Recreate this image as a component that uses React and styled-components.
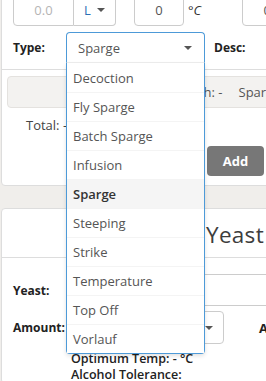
import React from 'react';
import styled, { createGlobalStyle } from 'styled-components';

const GlobalStyle = createGlobalStyle`
    html, body {
        margin: 0;
        padding: 0;
        background: #f0eeeb;
        overflow: hidden;
        font-family: "Open Sans", "Liberation Sans", sans-serif;
        font-size: 13px;
        color: #555;
    }
`;

const Page = styled.div`
    width: 266px;
    height: 381px;
    overflow: hidden;
`;

const Card = styled.div`
    position: relative;
    width: 420px;
    margin-left: 1px;
    margin-top: ${p => p.$top || 0}px;
    padding: ${p => p.$pad || '0'};
    background: #fff;
    border: 1px solid #ddd;
    border-radius: 4px;
    box-sizing: border-box;
`;

const Row = styled.div`
    display: flex;
    align-items: center;
    height: ${p => p.$h || 32}px;
    margin-top: ${p => p.$mt || 0}px;
    padding-left: 11px;
`;

const Label = styled.div`
    width: ${p => p.$w || 53}px;
    margin-left: ${p => p.$ml || 0}px;
    flex-shrink: 0;
    font-size: 12px;
    font-weight: 700;
    color: #222;
`;

const Group = styled.div`
    display: flex;
    height: 32px;
`;

const Input = styled.div`
    box-sizing: border-box;
    width: ${p => p.$w}px;
    height: ${p => p.$h || 32}px;
    margin-left: ${p => p.$ml || 0}px;
    padding-right: ${p => (p.$end ? 10 : 0)}px;
    border: 1px solid #ccc;
    border-radius: ${p => p.$radius || '4px'};
    display: flex;
    align-items: center;
    justify-content: ${p => (p.$end ? 'flex-end' : 'center')};
    color: ${p => (p.$placeholder ? '#b5b5b5' : '#555')};
    background: #fff;
    flex-shrink: 0;
`;

const UnitSelect = styled(Input)`
    border-left: none;
    color: #2a6fb5;
    gap: 6px;
`;

const Caret = styled.span`
    width: 0;
    height: 0;
    border-left: 4px solid transparent;
    border-right: 4px solid transparent;
    border-top: 4px solid #555;
`;

const Unit = styled.span`
    margin-left: 4px;
    color: #333;
`;

const SelectWrap = styled.div`
    position: relative;
    width: 139px;
    height: 31px;
    flex-shrink: 0;
`;

const SelectBox = styled.div`
    box-sizing: border-box;
    height: 31px;
    padding: 0 12px 0 11px;
    display: flex;
    align-items: center;
    justify-content: space-between;
    border: 1px solid #4d9ad8;
    border-bottom-color: #eee;
    border-radius: 4px 4px 0 0;
    color: #555;
    font-size: 13px;
    background: #fff;
`;

const Menu = styled.ul`
    position: absolute;
    top: 31px;
    left: 0;
    right: 0;
    z-index: 10;
    margin: 0;
    padding: 0;
    list-style: none;
    background: #fff;
    border: 1px solid #4d9ad8;
    border-top: none;
    border-radius: 0 0 4px 4px;
    box-shadow: 0 2px 4px rgba(0, 0, 0, 0.12);
`;

const Item = styled.li`
    height: 29px;
    box-sizing: border-box;
    padding-left: 6px;
    display: flex;
    align-items: center;
    font-size: 13px;
    color: ${p => (p.$active ? '#333' : '#555')};
    font-weight: ${p => (p.$active ? 600 : 400)};
    background: ${p => (p.$active ? '#f5f5f5' : '#fff')};
    border-top: 1px solid #f4f4f4;
    &:first-child {
        border-top: none;
    }
`;

const Divider = styled.div`
    height: 1px;
    background: #ddd;
    margin-top: ${p => p.$mt || 0}px;
`;

const Well = styled.div`
    box-sizing: border-box;
    height: 32px;
    margin: 6px 0 0 5px;
    padding-left: 101px;
    display: flex;
    align-items: center;
    background: #f3f2f0;
    border: 1px solid #e4e2df;
    border-radius: 4px;
    color: #555;
    white-space: nowrap;
`;

const WellItem = styled.span`
    margin-left: ${p => p.$ml || 0}px;
`;

const Total = styled.div`
    margin: 8px 0 0 24px;
    line-height: 18px;
    color: #444;
`;

const ButtonRow = styled.div`
    display: flex;
    padding-left: 205px;
    margin-top: 12px;
`;

const AddButton = styled.button`
    width: 57px;
    height: 30px;
    border: none;
    border-radius: 4px;
    background: #777;
    color: #fff;
    font-family: inherit;
    font-size: 13px;
    font-weight: 700;
`;

const Heading = styled.h2`
    margin: 0;
    padding: 11px 0 7px 204px;
    font-size: 22.5px;
    line-height: 30px;
    font-weight: 400;
    letter-spacing: 0.3px;
    color: #3d3d3d;
    border-bottom: 1px solid #ddd;
`;

const SideLabel = styled.div`
    margin-left: ${p => p.$ml}px;
    font-weight: ${p => (p.$bold ? 700 : 400)};
    white-space: nowrap;
    color: #222;
`;

const Info = styled.div`
    padding-left: 69px;
    margin-top: ${p => p.$mt || 0}px;
    height: 16px;
    line-height: 16px;
    color: #222;
    font-size: 12.5px;
    font-weight: 600;
    display: flex;
    align-items: center;
    white-space: nowrap;
`;

const types = ['Decoction', 'Fly Sparge', 'Batch Sparge', 'Infusion', 'Sparge', 'Steeping', 'Strike', 'Temperature', 'Top Off', 'Vorlauf'];

export default function App() {
    return (
        <Page>
            <GlobalStyle />
            <Card $top={-20} $pad="13px 0 9px 0">
                <Row>
                    <Group>
                        <Input $w={61} $placeholder $radius="4px 0 0 4px">0.0</Input>
                        <UnitSelect $w={42} $radius="0 4px 4px 0">L <Caret /></UnitSelect>
                    </Group>
                    <Input $w={50} $ml={18}>0</Input>
                    <Unit>°<i>C</i></Unit>
                    <Input $w={50} $ml={41}>0</Input>
                </Row>
                <Row $h={31} $mt={6}>
                    <Label>Type:</Label>
                    <SelectWrap>
                        <SelectBox>Sparge <Caret /></SelectBox>
                        <Menu>
                            {types.map(t => (
                                <Item key={t} $active={t === 'Sparge'}>{t}</Item>
                            ))}
                        </Menu>
                    </SelectWrap>
                    <Label $ml={9}>Desc:</Label>
                </Row>
                <Divider $mt={6} />
                <Well>
                    <WellItem>Vol: -</WellItem>
                    <WellItem $ml={31}>Length: -</WellItem>
                    <WellItem $ml={16}>Sparge</WellItem>
                </Well>
                <Total>Total: -</Total>
                <ButtonRow>
                    <AddButton>Add</AddButton>
                </ButtonRow>
            </Card>
            <Card $top={22}>
                <Heading>Yeast</Heading>
                <Row $mt={16}>
                    <Label>Yeast:</Label>
                    <Input $w={300} />
                </Row>
                <Row $h={33} $mt={5}>
                    <Label>Amount:</Label>
                    <Input $w={158} $h={33} $end><Caret /></Input>
                    <SideLabel $ml={35} $bold>Attenuation:</SideLabel>
                </Row>
                <Info $mt={7}>
                    Optimum Temp: - °C
                    <SideLabel $ml={87}>Flocculation:</SideLabel>
                </Info>
                <Info>Alcohol Tolerance:</Info>
            </Card>
        </Page>
    );
}
